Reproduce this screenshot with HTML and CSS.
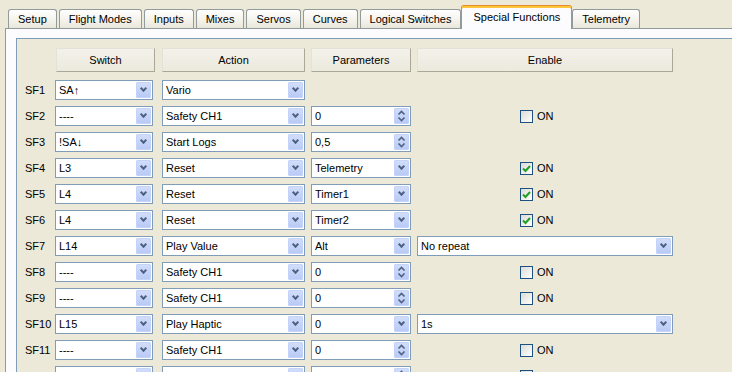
FILE: index.html
```html
<!DOCTYPE html>
<html lang="en">
<head>
  <meta charset="UTF-8" />
  <title>Special Functions</title>
  <link rel="stylesheet" href="styles.css">
</head>
<body>
  <!-- Tab bar -->
  <div class="tabs">
    <div class="tab">Setup</div>
    <div class="tab">Flight Modes</div>
    <div class="tab">Inputs</div>
    <div class="tab">Mixes</div>
    <div class="tab">Servos</div>
    <div class="tab">Curves</div>
    <div class="tab">Logical Switches</div>
    <div class="tab active">Special Functions</div>
    <div class="tab">Telemetry</div>
  </div>

  <div class="pane">
    <div class="scroll">
      <div class="grid">
        <!-- Header -->
        <div></div>
        <div class="head first">Switch</div>
        <div class="head">Action</div>
        <div class="head">Parameters</div>
        <div class="head">Enable</div>

        <!-- SF1 -->
        <div class="label">SF1</div>
        <div class="combo sw"><span>SA↑</span><i class="drop"></i></div>
        <div class="combo"><span>Vario</span><i class="drop"></i></div>
        <div></div>
        <div></div>

        <!-- SF2 -->
        <div class="label">SF2</div>
        <div class="combo sw"><span>----</span><i class="drop"></i></div>
        <div class="combo"><span>Safety CH1</span><i class="drop"></i></div>
        <div class="combo"><span>0</span><i class="spin"><svg width="15" height="16"><path d="M4.5 6.5L7.5 3.5L10.5 6.5M4.5 9.5L7.5 12.5L10.5 9.5"/></svg></i></div>
        <div class="check"><i class="box"></i>ON</div>

        <!-- SF3 -->
        <div class="label">SF3</div>
        <div class="combo sw"><span>!SA↓</span><i class="drop"></i></div>
        <div class="combo"><span>Start Logs</span><i class="drop"></i></div>
        <div class="combo"><span>0,5</span><i class="spin"><svg width="15" height="16"><path d="M4.5 6.5L7.5 3.5L10.5 6.5M4.5 9.5L7.5 12.5L10.5 9.5"/></svg></i></div>
        <div></div>

        <!-- SF4 -->
        <div class="label">SF4</div>
        <div class="combo sw"><span>L3</span><i class="drop"></i></div>
        <div class="combo"><span>Reset</span><i class="drop"></i></div>
        <div class="combo"><span>Telemetry</span><i class="drop"></i></div>
        <div class="check"><i class="box on"><svg width="11" height="11"><path d="M2 5.5L4.5 8L9 3"/></svg></i>ON</div>

        <!-- SF5 -->
        <div class="label">SF5</div>
        <div class="combo sw"><span>L4</span><i class="drop"></i></div>
        <div class="combo"><span>Reset</span><i class="drop"></i></div>
        <div class="combo"><span>Timer1</span><i class="drop"></i></div>
        <div class="check"><i class="box on"><svg width="11" height="11"><path d="M2 5.5L4.5 8L9 3"/></svg></i>ON</div>

        <!-- SF6 -->
        <div class="label">SF6</div>
        <div class="combo sw"><span>L4</span><i class="drop"></i></div>
        <div class="combo"><span>Reset</span><i class="drop"></i></div>
        <div class="combo"><span>Timer2</span><i class="drop"></i></div>
        <div class="check"><i class="box on"><svg width="11" height="11"><path d="M2 5.5L4.5 8L9 3"/></svg></i>ON</div>

        <!-- SF7 -->
        <div class="label">SF7</div>
        <div class="combo sw"><span>L14</span><i class="drop"></i></div>
        <div class="combo"><span>Play Value</span><i class="drop"></i></div>
        <div class="combo"><span>Alt</span><i class="drop"></i></div>
        <div class="combo"><span>No repeat</span><i class="drop"></i></div>

        <!-- SF8 -->
        <div class="label">SF8</div>
        <div class="combo sw"><span>----</span><i class="drop"></i></div>
        <div class="combo"><span>Safety CH1</span><i class="drop"></i></div>
        <div class="combo"><span>0</span><i class="spin"><svg width="15" height="16"><path d="M4.5 6.5L7.5 3.5L10.5 6.5M4.5 9.5L7.5 12.5L10.5 9.5"/></svg></i></div>
        <div class="check"><i class="box"></i>ON</div>

        <!-- SF9 -->
        <div class="label">SF9</div>
        <div class="combo sw"><span>----</span><i class="drop"></i></div>
        <div class="combo"><span>Safety CH1</span><i class="drop"></i></div>
        <div class="combo"><span>0</span><i class="spin"><svg width="15" height="16"><path d="M4.5 6.5L7.5 3.5L10.5 6.5M4.5 9.5L7.5 12.5L10.5 9.5"/></svg></i></div>
        <div class="check"><i class="box"></i>ON</div>

        <!-- SF10 -->
        <div class="label">SF10</div>
        <div class="combo sw"><span>L15</span><i class="drop"></i></div>
        <div class="combo"><span>Play Haptic</span><i class="drop"></i></div>
        <div class="combo"><span>0</span><i class="drop"></i></div>
        <div class="combo"><span>1s</span><i class="drop"></i></div>

        <!-- SF11 -->
        <div class="label">SF11</div>
        <div class="combo sw"><span>----</span><i class="drop"></i></div>
        <div class="combo"><span>Safety CH1</span><i class="drop"></i></div>
        <div class="combo"><span>0</span><i class="spin"><svg width="15" height="16"><path d="M4.5 6.5L7.5 3.5L10.5 6.5M4.5 9.5L7.5 12.5L10.5 9.5"/></svg></i></div>
        <div class="check"><i class="box"></i>ON</div>

        <!-- SF12 -->
        <div class="label">SF12</div>
        <div class="combo sw"><span>----</span><i class="drop"></i></div>
        <div class="combo"><span>Safety CH1</span><i class="drop"></i></div>
        <div class="combo"><span>0</span><i class="spin"><svg width="15" height="16"><path d="M4.5 6.5L7.5 3.5L10.5 6.5M4.5 9.5L7.5 12.5L10.5 9.5"/></svg></i></div>
        <div class="check"><i class="box"></i>ON</div>
      </div>
    </div>
  </div>
</body>
</html>
```

FILE: styles.css
```css
/* Base styling */
html, body {
  height: 100%;
}
body {
  margin: 0;
  background: #ece9d8;
  font-family: "Liberation Sans", Arial, sans-serif;
  font-size: 11px;
  color: #000;
  overflow: hidden;
}

/* Tabs */
.tabs {
  display: flex;
  align-items: flex-end;
  gap: 2px;
  height: 28px;
  padding-left: 8px;
  position: relative;
  z-index: 1;
}
.tab {
  height: 18px;
  line-height: 18px;
  padding: 0 9px;
  border: 1px solid #919b9c;
  border-bottom: none;
  border-radius: 3px 3px 0 0;
  background: linear-gradient(#ffffff, #f1efe6 70%, #e9e7dc);
  white-space: nowrap;
}
.tab.active {
  height: 20px;
  line-height: 19px;
  margin: 0 -2px -1px;
  padding: 0 11px 1px;
  background: #fcfcfe;
  border-top: 2px solid #ffc83c;
  box-shadow: 0 -1px 0 #e68b2c;
}

/* Tab pane */
.pane {
  margin-left: 5px;
  margin-right: -20px;
  height: 400px;
  border: 1px solid #919b9c;
  background: #fcfcfe;
  padding: 9px 0 0 10px;
}
.scroll {
  height: 400px;
  border: 1px solid #7f9db9;
  background: #ece9d8;
  padding: 9px 0 0 8px;
}

/* Function table */
.grid {
  display: grid;
  grid-template-columns: 25px 100px 143px 100px 256px;
  grid-template-rows: 26px;
  grid-auto-rows: 20px;
  gap: 6px;
}
.head {
  height: 22px;
  line-height: 22px;
  text-align: center;
  background: linear-gradient(#f3f1ea, #ece9dd);
  border: 1px solid;
  border-color: #e4e2d8 #aca899 #aca899 #e4e2d8;
}
.head.first {
  width: 97px;
}
.label {
  line-height: 20px;
}
.combo {
  position: relative;
  height: 18px;
  border: 1px solid #7f9db9;
  background: #fff;
  line-height: 18px;
  padding-left: 3px;
  white-space: nowrap;
}
.combo.sw {
  width: 93px;
  margin-left: -1px;
}
.drop,
.spin {
  position: absolute;
  top: 1px;
  right: 1px;
  width: 15px;
  height: 16px;
  border-radius: 2px;
  background: linear-gradient(#d3def9, #b7c9f5);
  box-shadow: inset 0 0 0 1px #c3d3fb;
}
.drop::after {
  content: "";
  position: absolute;
  left: 5px;
  top: 4px;
  width: 3px;
  height: 3px;
  border: solid #4d6185;
  border-width: 0 2px 2px 0;
  transform: rotate(45deg);
}
.spin svg {
  display: block;
}
.spin path {
  fill: none;
  stroke: #4d6185;
  stroke-width: 1.6;
}

/* Checkbox */
.check {
  display: flex;
  align-items: center;
  gap: 4px;
  padding-left: 103px;
}
.box {
  width: 11px;
  height: 11px;
  border: 1px solid #1c5180;
  background: linear-gradient(135deg, #dcdbd5, #fff);
}
.box svg {
  display: block;
}
.box path {
  fill: none;
  stroke: #21a121;
  stroke-width: 2;
}
```
